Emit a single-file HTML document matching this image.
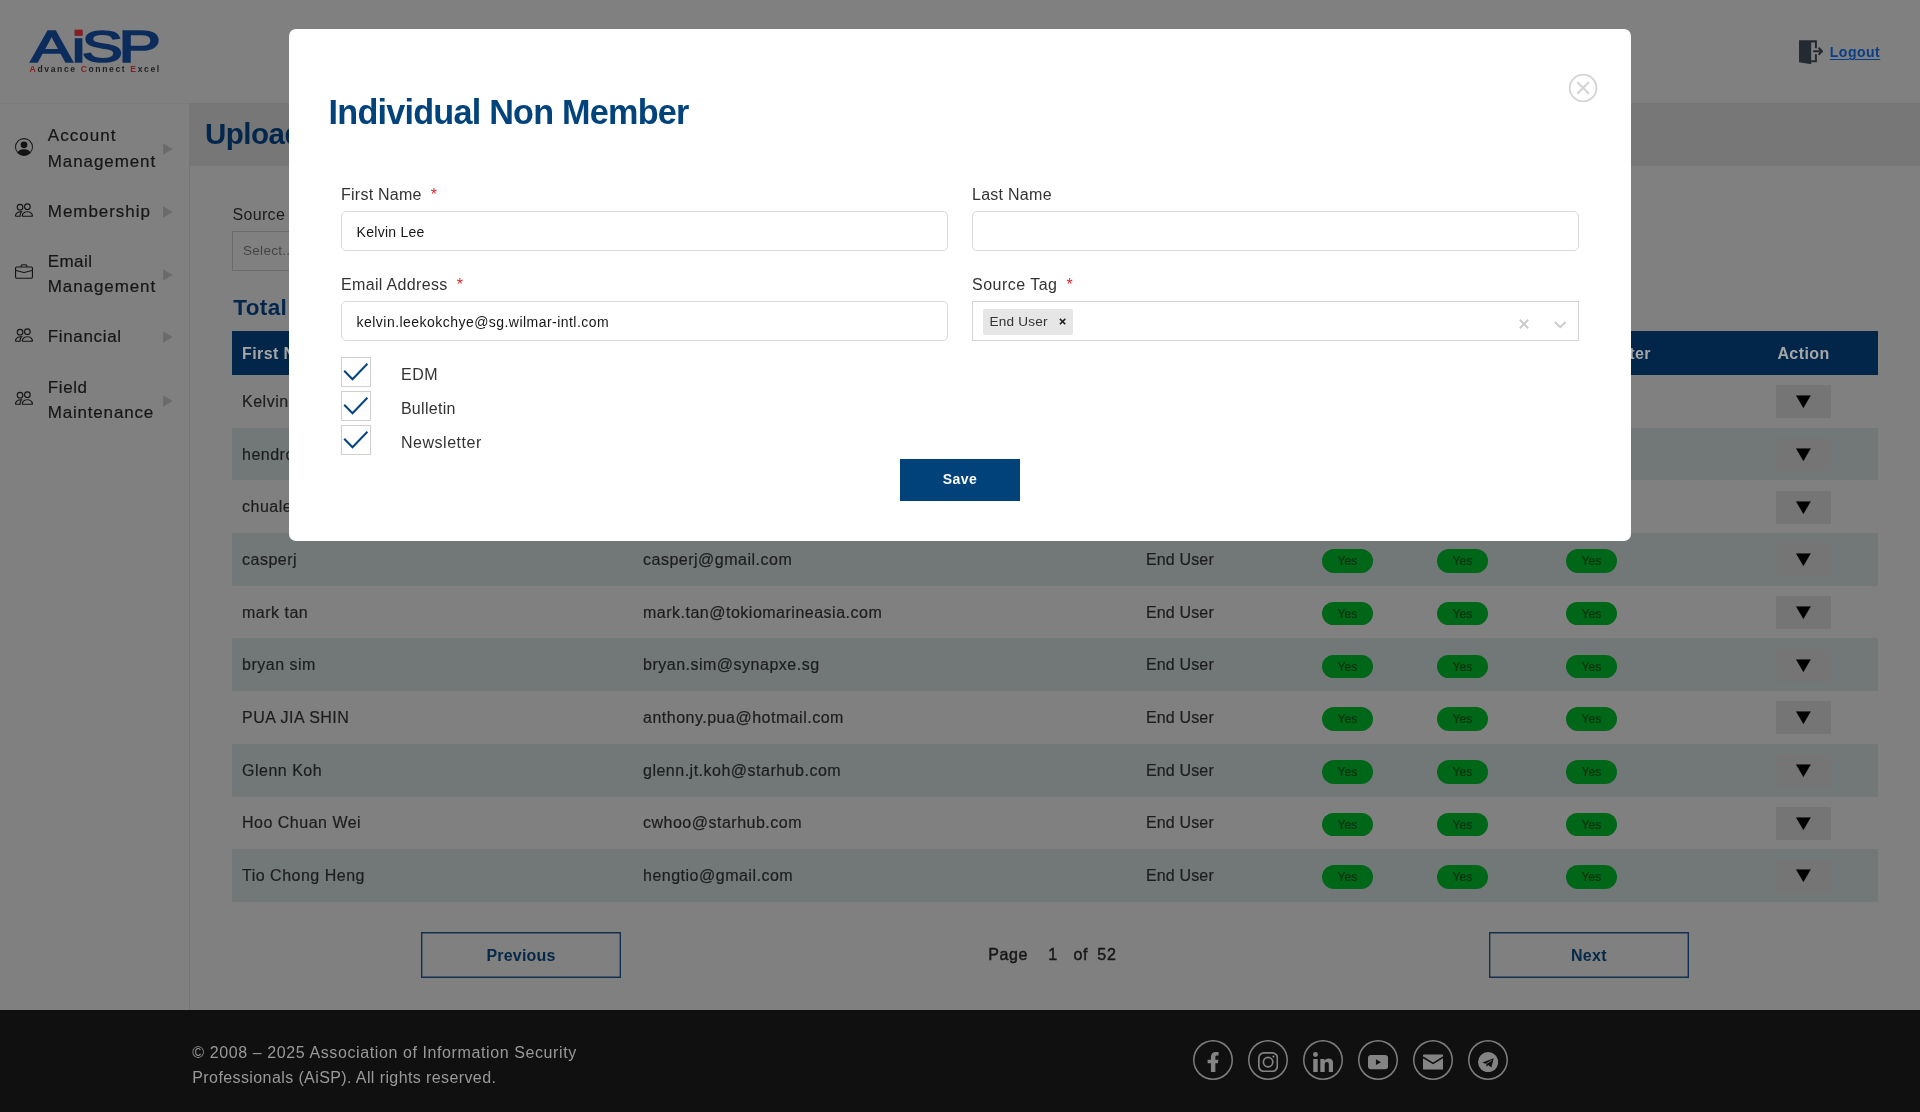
<!DOCTYPE html>
<html lang="en">
<head>
<meta charset="utf-8">
<title>AiSP Admin - Upload Individual Non Member</title>
<style>
*{box-sizing:border-box;margin:0;padding:0}
html,body{width:1920px;height:1112px;overflow:hidden}
body{position:relative;background:#808080;font-family:"Liberation Sans",sans-serif;color:#1b1b1b;font-size:16px;line-height:1}
button{font-family:inherit;cursor:pointer}
/* ---------- header ---------- */
.hdr{position:absolute;left:0;top:0;width:1920px;height:103px;background:#808080}
.hdr:after{content:"";position:absolute;left:0;top:103px;width:190px;height:1px;background:#7b7b7b}
.logo{position:absolute;left:28px;top:26px;width:134px;height:50px}
.logout{position:absolute;left:1799px;top:39.5px;height:24px;display:flex;align-items:center;text-decoration:none}
.logout svg{width:24px;height:24px;display:block}
.logout span{display:block;margin-left:6.8px;font-size:14px;font-weight:700;color:#0a3f88;letter-spacing:.5px;text-decoration:underline;text-decoration-thickness:1.2px;text-underline-offset:1.5px;line-height:16px;margin-top:1px}
/* ---------- sidebar ---------- */
.side{position:absolute;left:0;top:103px;width:190px;height:907px;border-right:1px solid #757575}
.side ul{list-style:none}
.side li{position:absolute;left:0;width:189px;padding:0 28px 0 47.8px;font-size:17px;line-height:26px;color:#161616;-webkit-text-stroke:.2px #161616}
.side li svg{position:absolute;left:14.9px;top:0;width:18px;height:18px}
.side .n1 svg{top:14.9px}.side .n2 svg{top:1.8px}.side .n3 svg{top:13.3px}.side .n4 svg{top:2.5px}.side .n5 svg{top:12.8px}
.side li .arr{position:absolute;left:162.8px;top:50%;margin-top:-7.4px;font-family:"DejaVu Sans",sans-serif;font-style:normal;font-size:15px;line-height:1;color:#6b6b6b;-webkit-text-stroke:0;letter-spacing:0;transform:scaleX(.853);transform-origin:0 0}
.side li span{display:block}
.side .n1{top:20px}.side .n2{top:95.9px}.side .n3{top:146.4px;line-height:25.1px}.side .n4{top:220.8px}.side .n5{top:273.4px;line-height:24.8px}
/* ---------- main ---------- */
.main{position:absolute;left:190px;top:103px;width:1730px;height:907px}
.titlebar{position:absolute;left:0;top:0;width:1730px;height:63px;background:#777}
.titlebar h1{position:absolute;left:15px;top:15.9px;font-size:29.5px;font-weight:700;color:#02264c;letter-spacing:-.5px;white-space:nowrap;line-height:1}
.filter{position:absolute;left:42px;top:0}
.flabel{position:absolute;left:.6px;top:103.9px;font-size:16px;letter-spacing:.3px;color:#1a1a1a;white-space:nowrap}
.fselect{position:absolute;left:0;top:128px;width:300px;height:39.5px;border:1px solid #6c6c6c;border-radius:0}
.fselect span{position:absolute;left:10px;top:12.4px;font-size:13.5px;color:#444;letter-spacing:.3px}
.total{position:absolute;left:43.2px;top:193.6px;font-size:22.5px;font-weight:700;color:#02264c;letter-spacing:.4px;white-space:nowrap;line-height:1}
table.grid{position:absolute;left:42px;top:228px;width:1646px;border-collapse:collapse;table-layout:fixed}
.grid th{letter-spacing:.4px;height:44px;padding-top:2.6px!important;background:#01264a;color:#a6a6a6;font-size:16px;font-weight:700;text-align:left;padding:0 0 0 10px;vertical-align:middle;white-space:nowrap;line-height:1}
.grid td{-webkit-text-stroke:.2px #1d1d1d;height:52.7px;padding:0 0 0 10px;vertical-align:middle;font-size:16px;color:#1d1d1d;letter-spacing:.5px;white-space:nowrap;line-height:1}
.grid tr.alt td{background:#727878}
.grid .c1{width:401px}.grid .c2{width:503px}.grid .c3{width:176px}.grid .c4{width:115px}.grid .c5{width:129px}.grid .c6{width:173px}
.grid .c7{width:149px;text-align:center;padding:0}
.grid td.c3{letter-spacing:.15px}
.grid th.c7{padding:0 0 0 0}
.grid td.c1,.grid td.c2,.grid td.c3{padding-top:1px}
.yes{display:block;width:51px;height:23.6px;border-radius:12px;background:#006618;color:#003c0b;font-size:12px;letter-spacing:.1px;text-align:center;line-height:24.6px;position:relative;top:1.6px}
.act{display:block;margin:0 auto;width:55px;height:33px;border:0;background:#757575;position:relative;top:.5px}
.tri{position:absolute;left:20.05px;top:6.9px;font-family:"DejaVu Sans",sans-serif;font-style:normal;font-size:19.2px;line-height:1;color:#000;transform:scaleY(.857);transform-origin:0 0}
.pager{position:absolute;left:0;top:829px;width:1730px;height:46px}
.pbtn{position:absolute;top:0;width:200px;height:45.6px;padding-top:2px;background:transparent;border:0;box-shadow:inset 0 0 0 1.4px #12304f;color:#062848;font-size:16px;font-weight:700;line-height:1}
.pbtn.prev{left:231px;letter-spacing:.2px}
.pbtn.next{left:1299px;letter-spacing:.35px}
.pinfo{position:absolute;left:0;top:0;font-size:16px;color:#171717;-webkit-text-stroke:.45px #171717}
.pinfo span{position:absolute;top:15.4px;white-space:nowrap}
.pg{left:798.2px;letter-spacing:.6px}.p1{left:858.2px}.pof{left:883.6px;letter-spacing:.4px}.p52{left:907.3px;letter-spacing:.9px}
/* ---------- footer ---------- */
.ftr{position:absolute;left:0;top:1009.5px;width:1920px;height:102.5px;background:#101010}
.ftr p{position:absolute;left:192.3px;top:31px;font-size:16px;line-height:24.5px;color:#999;white-space:nowrap}
.ftr p span{display:block}
.ftr .l1{letter-spacing:.6px}.ftr .l2{letter-spacing:.4px}
.soc{position:absolute;left:1192.7px;top:30.3px;display:flex;list-style:none}
.soc li{width:40.2px;height:40.2px;border:0;box-shadow:inset 0 0 0 1.5px #7e7e7e;border-radius:50%;margin-right:14.8px;position:relative}
.soc svg{position:absolute;left:10px;top:12px;width:20.2px;height:20.2px}
/* ---------- modal ---------- */
.modal{position:absolute;left:289px;top:29px;width:1342px;height:512px;background:#fff;border-radius:7px}
.modal h2{position:absolute;left:39.6px;top:65.9px;font-size:34.2px;font-weight:700;color:#02437b;letter-spacing:-.77px;white-space:nowrap;line-height:1}
.close{position:absolute;left:1278px;top:43px;width:32px;height:32px;border:0;background:transparent;padding:0}
.close svg{position:absolute;left:0;top:0;width:100%;height:100%}
.fld{position:absolute;width:607px}
.fld label{position:absolute;left:0;top:.5px;font-size:16px;color:#333;white-space:nowrap;line-height:1}
.fld label b{font-weight:400;color:#e0242b;margin-left:9px;letter-spacing:0}
.fld .inp{position:absolute;left:0;top:24.6px;width:607px;height:40px;border:1px solid #d9d9d9;border-radius:5px;background:#fff;font-size:14px;color:#161616;padding:0 0 0 14.6px;line-height:40.6px;white-space:nowrap}
.fld .sel{border-radius:0;border-color:#d4d4d4;padding:0}
.chip{position:absolute;left:10.2px;top:7px;width:89.8px;height:26px;background:#e6e6e6;border-radius:2px;font-size:13.6px;color:#333;line-height:25.6px;padding-left:6.2px;letter-spacing:.2px}
.chip svg{position:absolute;left:75.6px;top:9.1px;width:7.2px;height:7.2px}
.sel .clr{position:absolute;left:546.4px;top:16.8px;width:10px;height:10px}
.sel .chev{position:absolute;left:581px;top:19px;width:12.4px;height:7.6px}
.chk{position:absolute;left:52px;height:30px}
.chk i{position:absolute;left:0;top:0;width:30px;height:30px;border:1px solid #cfcfcf;background:#fff}
.chk i svg{position:absolute;left:-1px;top:-1px;width:30px;height:30px}
.chk span{position:absolute;left:59.9px;top:10px;font-size:16px;color:#333;white-space:nowrap;line-height:1}
.save{position:absolute;left:611px;top:430px;width:120px;height:42px;border:0;background:#01427a;color:#fff;font-size:14px;font-weight:700;letter-spacing:.4px;line-height:1;padding-bottom:1.6px}
.side li em{font-style:normal;white-space:nowrap}
.modal,.side,.main,.hdr,.ftr{will-change:transform}
.side .n1 .arr,.side .n2 .arr,.side .n5 .arr{margin-top:-8.4px}

</style>
</head>
<body>
<header class="hdr">
<a class="brand" aria-label="AiSP">
<svg class="logo" viewBox="0 0 134 50">
<g><text y="35.9" font-family="Liberation Sans, sans-serif" font-weight="400" font-size="44.6" fill="#0c2c5c" stroke="#0c2c5c" stroke-width="1.7" stroke-linejoin="miter"><tspan x="2.65" textLength="41.6" lengthAdjust="spacingAndGlyphs">A</tspan><tspan x="43.95" font-size="41.8" textLength="13.2" lengthAdjust="spacingAndGlyphs">i</tspan><tspan x="53.84" textLength="41.06" lengthAdjust="spacingAndGlyphs">S</tspan><tspan x="90.4" textLength="42.3" lengthAdjust="spacingAndGlyphs">P</tspan></text></g>
<rect x="46.7" y="3.6" width="7.8" height="6" fill="#8c1c1f"/>
<text x="1.6" y="45.7" font-family="Liberation Sans, sans-serif" font-weight="700" font-size="8.6" fill="#1f1f1f" textLength="129.6" lengthAdjust="spacing"><tspan fill="#8a1c1c">A</tspan>dvance <tspan fill="#8a1c1c">C</tspan>onnect <tspan fill="#8a1c1c">E</tspan>xcel</text>
</svg>
</a>
<a class="logout">
<svg viewBox="0 0 24 24"><path d="M0 0.3H17.9V8.2H15.9V2.4H12.2V24.2L0 22.2Z" fill="#242a32"/><path d="M12.2 20.2H15.9V14.3H17.9V22.2H12.2Z" fill="#242a32"/><path d="M14.2 11.2H22.4M19.6 7.7L23.1 11.2L19.6 14.7" fill="none" stroke="#242a32" stroke-width="2"/></svg>
<span>Logout</span>
</a>
</header>
<aside class="side">
<ul>
<li class="n1"><svg viewBox="0 0 16 16" fill="#141414"><path d="M11 6a3 3 0 1 1-6 0 3 3 0 0 1 6 0"/><path fill-rule="evenodd" d="M0 8a8 8 0 1 1 16 0A8 8 0 0 1 0 8m8-7a7 7 0 0 0-5.468 11.370C3.242 11.226 4.805 10 8 10s4.757 1.225 5.468 2.370A7 7 0 0 0 8 1"/></svg><span><em style="letter-spacing:1.04px">Account</em> <em style="letter-spacing:.9px">Management</em></span><i class="arr">▶</i></li>
<li class="n2"><svg viewBox="0 0 16 16" fill="#141414"><path d="M15 14s1 0 1-1-1-4-5-4-5 3-5 4 1 1 1 1zm-7.978-1L7 12.996c.001-.264.167-1.030.760-1.720C8.312 10.629 9.282 10 11 10c1.717 0 2.687.630 3.240 1.276.593.690.758 1.457.760 1.720l-.8.002-.14.002zM11 7a2 2 0 1 0 0-4 2 2 0 0 0 0 4m3-2a3 3 0 1 1-6 0 3 3 0 0 1 6 0M6.936 9.280a6 6 0 0 0-1.230-.247A7 7 0 0 0 5 9c-4 0-5 3-5 4q0 1 1 1h4.216A2.240 2.240 0 0 1 5 13c0-1.010.377-2.042 1.090-2.904.243-.294.526-.569.846-.816M4.920 10A5.500 5.500 0 0 0 4 13H1c0-.260.164-1.030.760-1.724.545-.636 1.492-1.256 3.160-1.275ZM1.500 5.500a3 3 0 1 1 6 0 3 3 0 0 1-6 0m3-2a2 2 0 1 0 0 4 2 2 0 0 0 0-4"/></svg><span><em style="letter-spacing:.95px">Membership</em></span><i class="arr">▶</i></li>
<li class="n3"><svg viewBox="0 0 16 16" fill="#141414"><path d="M6.500 1A1.500 1.500 0 0 0 5 2.500V3H1.500A1.500 1.500 0 0 0 0 4.500v8A1.500 1.500 0 0 0 1.500 14h13a1.500 1.500 0 0 0 1.500-1.500v-8A1.500 1.500 0 0 0 14.500 3H11v-.5A1.500 1.500 0 0 0 9.500 1zm0 1h3a.5.5 0 0 1 .5.5V3H6v-.5a.5.5 0 0 1 .5-.5m1.886 6.914L15 7.151V12.500a.5.5 0 0 1-.5.5h-13a.5.5 0 0 1-.5-.5V7.150l6.614 1.764a1.500 1.500 0 0 0 .772 0M1.500 4h13a.5.5 0 0 1 .5.5v1.616L8.129 7.948a.5.5 0 0 1-.258 0L1 6.116V4.500a.5.5 0 0 1 .5-.5"/></svg><span><em style="letter-spacing:.4px">Email</em> <em style="letter-spacing:.9px">Management</em></span><i class="arr">▶</i></li>
<li class="n4"><svg viewBox="0 0 16 16" fill="#141414"><path d="M15 14s1 0 1-1-1-4-5-4-5 3-5 4 1 1 1 1zm-7.978-1L7 12.996c.001-.264.167-1.030.760-1.720C8.312 10.629 9.282 10 11 10c1.717 0 2.687.630 3.240 1.276.593.690.758 1.457.760 1.720l-.8.002-.14.002zM11 7a2 2 0 1 0 0-4 2 2 0 0 0 0 4m3-2a3 3 0 1 1-6 0 3 3 0 0 1 6 0M6.936 9.280a6 6 0 0 0-1.230-.247A7 7 0 0 0 5 9c-4 0-5 3-5 4q0 1 1 1h4.216A2.240 2.240 0 0 1 5 13c0-1.010.377-2.042 1.090-2.904.243-.294.526-.569.846-.816M4.920 10A5.500 5.500 0 0 0 4 13H1c0-.260.164-1.030.760-1.724.545-.636 1.492-1.256 3.160-1.275ZM1.500 5.500a3 3 0 1 1 6 0 3 3 0 0 1-6 0m3-2a2 2 0 1 0 0 4 2 2 0 0 0 0-4"/></svg><span><em style="letter-spacing:.65px">Financial</em></span><i class="arr">▶</i></li>
<li class="n5"><svg viewBox="0 0 16 16" fill="#141414"><path d="M15 14s1 0 1-1-1-4-5-4-5 3-5 4 1 1 1 1zm-7.978-1L7 12.996c.001-.264.167-1.030.760-1.720C8.312 10.629 9.282 10 11 10c1.717 0 2.687.630 3.240 1.276.593.690.758 1.457.760 1.720l-.8.002-.14.002zM11 7a2 2 0 1 0 0-4 2 2 0 0 0 0 4m3-2a3 3 0 1 1-6 0 3 3 0 0 1 6 0M6.936 9.280a6 6 0 0 0-1.230-.247A7 7 0 0 0 5 9c-4 0-5 3-5 4q0 1 1 1h4.216A2.240 2.240 0 0 1 5 13c0-1.010.377-2.042 1.090-2.904.243-.294.526-.569.846-.816M4.920 10A5.500 5.500 0 0 0 4 13H1c0-.260.164-1.030.760-1.724.545-.636 1.492-1.256 3.160-1.275ZM1.500 5.500a3 3 0 1 1 6 0 3 3 0 0 1-6 0m3-2a2 2 0 1 0 0 4 2 2 0 0 0 0-4"/></svg><span><em style="letter-spacing:.6px">Field</em> <em style="letter-spacing:.8px">Maintenance</em></span><i class="arr">▶</i></li>
</ul>
</aside>
<main class="main">
<div class="titlebar"><h1>Upload Individual Non Member</h1></div>
<div class="filter"><label class="flabel">Source Tag</label><div class="fselect"><span>Select...</span></div></div>
<h2 class="total">Total Individual Non Members : 515</h2>
<table class="grid">
<thead><tr><th class="c1">First Name</th><th class="c2">Email Address</th><th class="c3">Source Tag</th><th class="c4">EDM</th><th class="c5">Bulletin</th><th class="c6">Newsletter</th><th class="c7">Action</th></tr></thead>
<tbody>
<tr><td class="c1">Kelvin Lee</td><td class="c2">kelvin.leekokchye@sg.wilmar-intl.com</td><td class="c3">End User</td><td class="c4"><span class="yes">Yes</span></td><td class="c5"><span class="yes">Yes</span></td><td class="c6"><span class="yes">Yes</span></td><td class="c7"><button class="act" type="button"><i class="tri">▼</i></button></td></tr>
<tr class="alt"><td class="c1">hendro</td><td class="c2">hendro.wijaya@gmail.com</td><td class="c3">End User</td><td class="c4"><span class="yes">Yes</span></td><td class="c5"><span class="yes">Yes</span></td><td class="c6"><span class="yes">Yes</span></td><td class="c7"><button class="act" type="button"><i class="tri">▼</i></button></td></tr>
<tr><td class="c1">chualeong</td><td class="c2">chualeong@outlook.com</td><td class="c3">End User</td><td class="c4"><span class="yes">Yes</span></td><td class="c5"><span class="yes">Yes</span></td><td class="c6"><span class="yes">Yes</span></td><td class="c7"><button class="act" type="button"><i class="tri">▼</i></button></td></tr>
<tr class="alt"><td class="c1">casperj</td><td class="c2">casperj@gmail.com</td><td class="c3">End User</td><td class="c4"><span class="yes">Yes</span></td><td class="c5"><span class="yes">Yes</span></td><td class="c6"><span class="yes">Yes</span></td><td class="c7"><button class="act" type="button"><i class="tri">▼</i></button></td></tr>
<tr><td class="c1">mark tan</td><td class="c2">mark.tan@tokiomarineasia.com</td><td class="c3">End User</td><td class="c4"><span class="yes">Yes</span></td><td class="c5"><span class="yes">Yes</span></td><td class="c6"><span class="yes">Yes</span></td><td class="c7"><button class="act" type="button"><i class="tri">▼</i></button></td></tr>
<tr class="alt"><td class="c1">bryan sim</td><td class="c2">bryan.sim@synapxe.sg</td><td class="c3">End User</td><td class="c4"><span class="yes">Yes</span></td><td class="c5"><span class="yes">Yes</span></td><td class="c6"><span class="yes">Yes</span></td><td class="c7"><button class="act" type="button"><i class="tri">▼</i></button></td></tr>
<tr><td class="c1">PUA JIA SHIN</td><td class="c2">anthony.pua@hotmail.com</td><td class="c3">End User</td><td class="c4"><span class="yes">Yes</span></td><td class="c5"><span class="yes">Yes</span></td><td class="c6"><span class="yes">Yes</span></td><td class="c7"><button class="act" type="button"><i class="tri">▼</i></button></td></tr>
<tr class="alt"><td class="c1">Glenn Koh</td><td class="c2">glenn.jt.koh@starhub.com</td><td class="c3">End User</td><td class="c4"><span class="yes">Yes</span></td><td class="c5"><span class="yes">Yes</span></td><td class="c6"><span class="yes">Yes</span></td><td class="c7"><button class="act" type="button"><i class="tri">▼</i></button></td></tr>
<tr><td class="c1">Hoo Chuan Wei</td><td class="c2">cwhoo@starhub.com</td><td class="c3">End User</td><td class="c4"><span class="yes">Yes</span></td><td class="c5"><span class="yes">Yes</span></td><td class="c6"><span class="yes">Yes</span></td><td class="c7"><button class="act" type="button"><i class="tri">▼</i></button></td></tr>
<tr class="alt"><td class="c1">Tio Chong Heng</td><td class="c2">hengtio@gmail.com</td><td class="c3">End User</td><td class="c4"><span class="yes">Yes</span></td><td class="c5"><span class="yes">Yes</span></td><td class="c6"><span class="yes">Yes</span></td><td class="c7"><button class="act" type="button"><i class="tri">▼</i></button></td></tr>
</tbody>
</table>
<div class="pager"><button class="pbtn prev" type="button">Previous</button><div class="pinfo"><span class="pg">Page</span><span class="p1">1</span><span class="pof">of</span><span class="p52">52</span></div><button class="pbtn next" type="button">Next</button></div>
</main>
<footer class="ftr">
<p><span class="l1">© 2008 – 2025 Association of Information Security</span><span class="l2">Professionals (AiSP). All rights reserved.</span></p>
<ul class="soc">
<li><svg viewBox="0 0 24 24"><path d="M9.4 24V13.3H5.500V9.200H9.400V6.100C9.400 2.200 11.700 0 15.300 0C17 0 18.500 .13 18.500 .13V4.100H16.500C14.900 4.100 14.700 5.100 14.700 6.300V9.200H18.300L17.700 13.300H14.700V24Z" fill="#848484"/></svg></li>
<li><svg viewBox="0 0 24 24"><rect x="1" y="1" width="22" height="22" rx="6" fill="none" stroke="#848484" stroke-width="2"/><circle cx="12" cy="12" r="5.600" fill="none" stroke="#848484" stroke-width="2"/><circle cx="18.400" cy="5.400" r="1.300" fill="#848484"/></svg></li>
<li><svg viewBox="0 0 24 24"><circle cx="2.950" cy="2.950" r="2.950" fill="#848484"/><path d="M.3 8.200H5.600V24H.3ZM8.700 8.200H13.700V10.400C14.400 9.100 16.100 7.800 18.600 7.800C23.200 7.800 24 10.900 24 14.900V24H18.800V15.900C18.800 14 18.800 11.900 16.500 11.900C14.100 11.900 13.900 13.600 13.900 15.800V24H8.700Z" fill="#848484"/></svg></li>
<li><svg viewBox="0 0 24 24"><rect x="0" y="3.600" width="24" height="16.800" rx="3.600" fill="#848484"/><path d="M9.400 8.600L15.500 12.100L9.400 15.600Z" fill="#101010"/></svg></li>
<li><svg viewBox="0 0 24 24"><rect x="0" y="3.100" width="24" height="17.800" rx=".8" fill="#848484"/><path d="M0 6.200L12 13.500L24 6.200" fill="none" stroke="#101010" stroke-width="1.900"/></svg></li>
<li><svg viewBox="0 0 24 24"><circle cx="12" cy="12" r="12" fill="#848484"/><path d="M5.200 12.500L18.700 7.400L15.900 18.300L11.900 15.400L10.300 17.500L9.700 14.200Z" fill="#101010"/><path d="M9.800 14.100L16.400 9.700" stroke="#848484" stroke-width="1" fill="none"/></svg></li>
</ul>
</footer>
<div class="modal" role="dialog" aria-modal="true">
<h2>Individual Non Member</h2>
<button class="close" type="button" aria-label="Close"><svg viewBox="0 0 32 32"><circle cx="16.1" cy="16" r="13.4" fill="#fff" stroke="#d4d4d4" stroke-width="1.8"/><path d="M10.2 10.1L21.900 21.800M21.900 10.100L10.200 21.800" stroke="#d4d4d4" stroke-width="2.100" fill="none"/></svg></button>
<div class="fld" style="left:52px;top:157.4px"><label style="letter-spacing:.25px">First Name<b>*</b></label><div class="inp" style="letter-spacing:.27px">Kelvin Lee</div></div>
<div class="fld" style="left:683px;top:157.4px"><label style="letter-spacing:.27px">Last Name</label><div class="inp"></div></div>
<div class="fld" style="left:52px;top:247.4px"><label style="letter-spacing:.34px">Email Address<b>*</b></label><div class="inp" style="letter-spacing:.46px">kelvin.leekokchye@sg.wilmar-intl.com</div></div>
<div class="fld" style="left:683px;top:247.4px"><label style="letter-spacing:.48px">Source Tag<b>*</b></label><div class="inp sel"><div class="chip">End User<svg viewBox="0 0 8 8"><path d="M1 1L7 7M7 1L1 7" stroke="#1f1f1f" stroke-width="1.700" fill="none"/></svg></div><svg class="clr" viewBox="0 0 10 10"><path d="M.8 .8L9.200 9.200M9.200 .8L.8 9.200" stroke="#cbcbcb" stroke-width="2" fill="none"/></svg><svg class="chev" viewBox="0 0 12.400 7.600"><path d="M.8 .9L6.200 6.200L11.600 .9" stroke="#cbcbcb" stroke-width="2" fill="none"/></svg></div></div>
<div class="chk" style="top:328px"><i><svg viewBox="0 0 30 30"><path d="M3.200 13.700L11.500 22.300L26.400 6.700" stroke="#05457f" stroke-width="2" fill="none"/></svg></i><span style="letter-spacing:.6px">EDM</span></div>
<div class="chk" style="top:362.200px"><i><svg viewBox="0 0 30 30"><path d="M3.200 13.700L11.500 22.300L26.400 6.700" stroke="#05457f" stroke-width="2" fill="none"/></svg></i><span style="letter-spacing:.29px">Bulletin</span></div>
<div class="chk" style="top:396.200px"><i><svg viewBox="0 0 30 30"><path d="M3.200 13.700L11.500 22.300L26.400 6.700" stroke="#05457f" stroke-width="2" fill="none"/></svg></i><span style="letter-spacing:.54px">Newsletter</span></div>
<button class="save" type="button">Save</button>
</div>
</body>
</html>
